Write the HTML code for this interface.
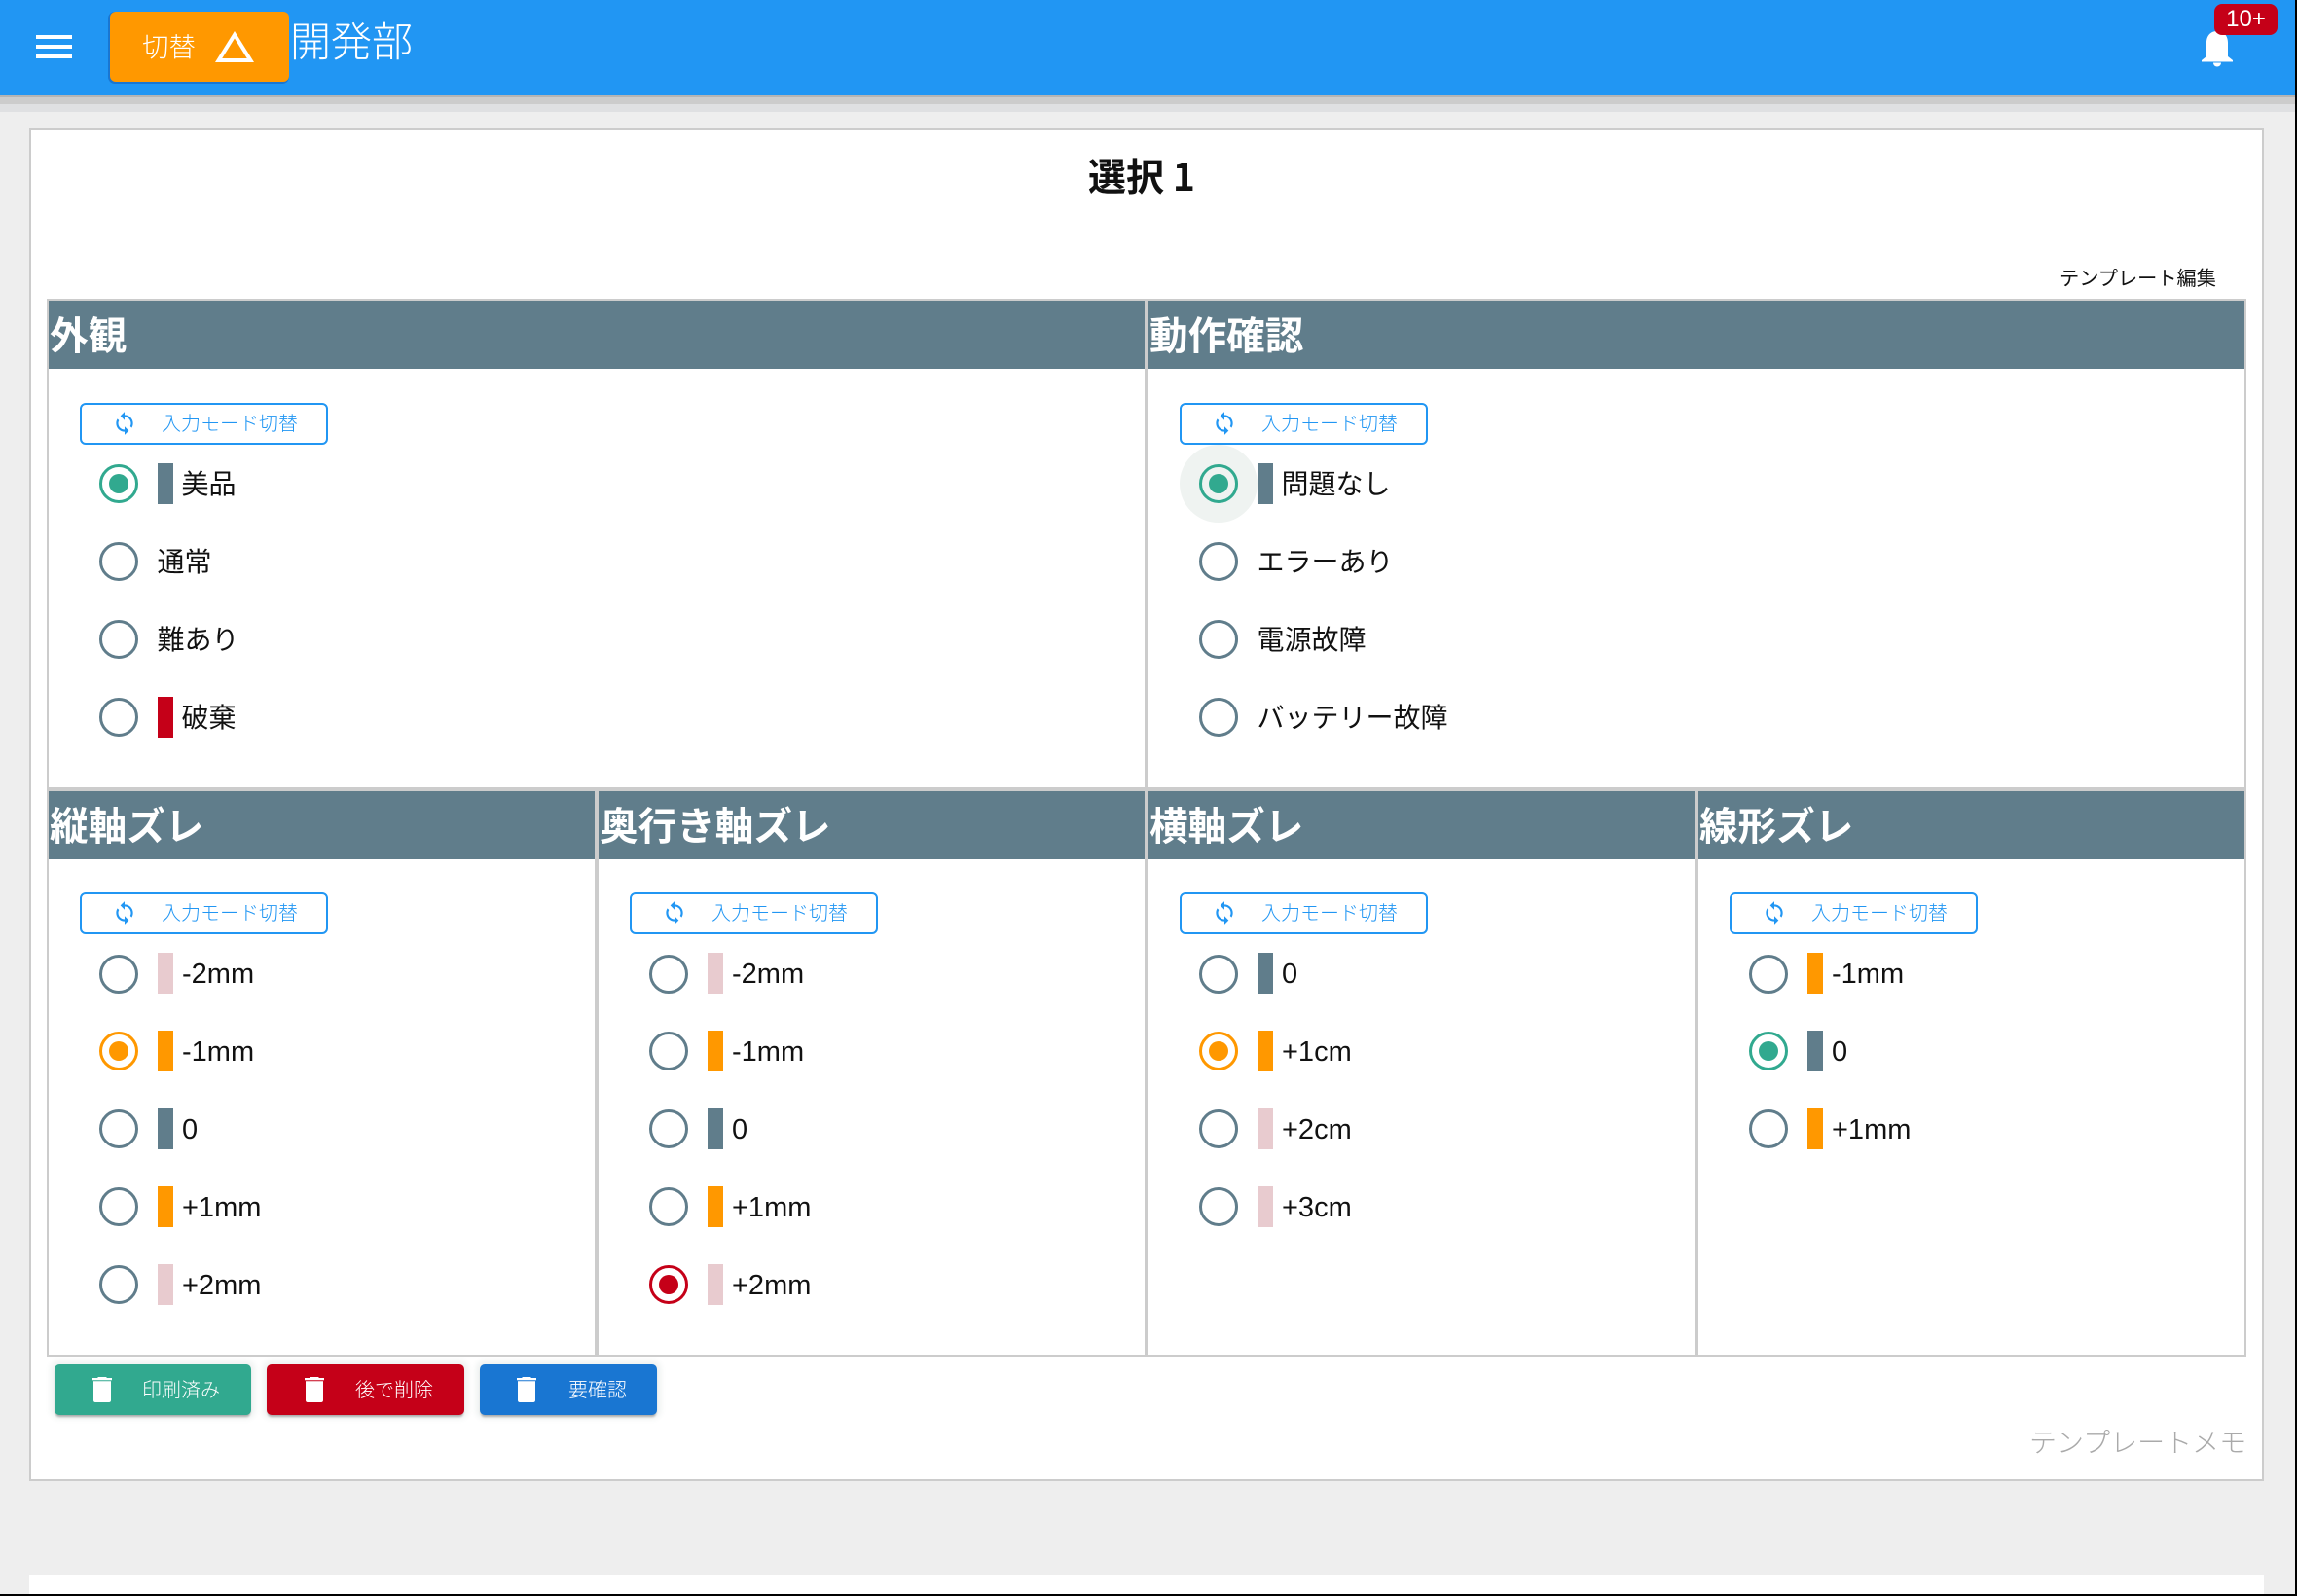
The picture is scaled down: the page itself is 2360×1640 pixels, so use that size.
<!DOCTYPE html>
<html lang="ja"><head><meta charset="utf-8"><title>選択 1</title>
<style>
html,body{margin:0;padding:0;width:2360px;height:1640px;overflow:hidden;background:#000}
body{position:relative;font-family:"Liberation Sans","Noto Sans CJK JP",sans-serif;color:#111}
div,span,svg{position:absolute;box-sizing:border-box}
.t{white-space:nowrap;line-height:40px;height:40px;font-size:28px;margin-top:1px;margin-left:-.5px}
.l{margin-top:1px;margin-left:0;font-size:29px}
.r{width:40px;height:40px;border-radius:50%;border:3px solid #607D8B;background:#fff}
.g{border-color:#31A98F}.o{border-color:#FF9800}.d{border-color:#C50018}
.r i{position:absolute;left:7px;top:7px;width:20px;height:20px;border-radius:50%;display:block}
.g i{background:#31A98F}.o i{background:#FF9800}.d i{background:#C50018}
.b{width:16px;height:42px}
.s{background:#607D8B}.p{background:#E8CBCF}.a{background:#FF9800}.c{background:#C50018}
.h{background:#607D8B;height:70px}
.ht{color:#fff;font-size:39.600px;font-weight:700;line-height:70px;height:70px;white-space:nowrap;margin-top:2px}
.ln{background:#ccc}
.m{width:255px;height:43px;border:2px solid #2196F3;border-radius:6px;background:#fff}
.mt{color:#2196F3;font-size:20px;line-height:39px;left:82px;top:1px;white-space:nowrap;font-weight:300}
.mi{left:31px;top:6px}
.btn{top:1402px;height:52px;border-radius:5px;box-shadow:0 3px 2px -1px rgba(0,0,0,.3),0 0 6px 4px rgba(49,90,80,.08)}
.bt{color:#fff;font-size:20px;line-height:52px;white-space:nowrap;font-weight:300;top:1px}
.ti{top:13px}
</style></head><body>
<div style="left:0;top:0;width:2358px;height:1638px;background:#eee"></div>
<div style="left:0;top:98px;width:2358px;height:9px;background:#ccc"></div>
<div style="left:0;top:98px;width:2358px;height:2px;background:#b4b4b4"></div>
<div style="left:0;top:107px;width:2358px;height:8px;background:#dfe0e2"></div>
<div style="left:0;top:0;width:2358px;height:98px;background:#2196F3"></div>

<div style="left:37px;top:36px;width:37px;height:4px;background:#fff"></div>
<div style="left:37px;top:46px;width:37px;height:4px;background:#fff"></div>
<div style="left:37px;top:56px;width:37px;height:4px;background:#fff"></div>

<div style="left:113px;top:12px;width:184px;height:72px;background:#FF9800;border-radius:6px;box-shadow:-1px 1px 0 1px #1976D2"></div>
<span style="left:146px;top:29px;color:#fff;font-size:27.500px;line-height:40px;white-space:nowrap;font-weight:300">切替</span>
<svg style="left:217px;top:24px" width="48" height="48" viewBox="0 0 24 24"><path fill="#fff" d="M12 7.770L18.390 18H5.610L12 7.770M12 4L2 20h20L12 4z"/></svg>
<span style="left:298px;top:18px;color:#fff;font-size:42px;line-height:52px;white-space:nowrap;font-weight:300">開発部</span>

<svg style="left:2262px;top:30px" width="32" height="40" viewBox="0 0 32 40"><path fill="#fff" d="M16 2c-7 0-11 5-11 12v14L0 32v1.500h32V32l-5-4V14C27 7 23 2 16 2zM12 34.500c0 2.500 2 4 4 4s4-1.500 4-4z"/></svg>
<div style="left:2275px;top:4px;width:65px;height:32px;background:#C50018;border-radius:8px;color:#fff;font-size:24px;line-height:32px;text-align:center">10+</div>

<div style="left:30px;top:132px;width:2296px;height:1390px;background:#fff;border:2px solid #ccc"></div>
<div style="left:30px;top:1618px;width:2296px;height:20px;background:#fff"></div>
<span style="left:1118px;top:156px;font-size:39px;font-weight:700;line-height:48px;white-space:nowrap;font-family:'Noto Sans CJK JP',sans-serif">選択 1</span>
<span style="left:2116px;top:272.500px;font-size:20.200px;line-height:28px;white-space:nowrap;color:#111">テンプレート編集</span>

<!-- grid lines -->
<div class="ln" style="left:48px;top:307px;width:2260px;height:2px"></div>
<div class="ln" style="left:48px;top:809px;width:2260px;height:4px"></div>
<div class="ln" style="left:48px;top:1392px;width:2260px;height:2px"></div>
<div class="ln" style="left:48px;top:307px;width:2px;height:1087px"></div>
<div class="ln" style="left:2306px;top:307px;width:2px;height:1087px"></div>
<div class="ln" style="left:1176px;top:307px;width:4px;height:1087px"></div>
<div class="ln" style="left:611px;top:809px;width:4px;height:585px"></div>
<div class="ln" style="left:1741px;top:809px;width:4px;height:585px"></div>

<!-- headers -->
<div class="h" style="left:50px;top:309px;width:1126px"></div>
<div class="h" style="left:1180px;top:309px;width:1126px"></div>
<div class="h" style="left:50px;top:813px;width:561px"></div>
<div class="h" style="left:615px;top:813px;width:561px"></div>
<div class="h" style="left:1180px;top:813px;width:561px"></div>
<div class="h" style="left:1745px;top:813px;width:561px"></div>
<span class="ht" style="left:51px;top:309px">外観</span>
<span class="ht" style="left:1181px;top:309px">動作確認</span>
<span class="ht" style="left:51px;top:813px">縦軸ズレ</span>
<span class="ht" style="left:616px;top:813px">奥行き軸ズレ</span>
<span class="ht" style="left:1181px;top:813px">横軸ズレ</span>
<span class="ht" style="left:1746px;top:813px">線形ズレ</span>

<!-- mode buttons -->
<div class="m" style="left:82px;top:414px"><svg class="mi" width="26" height="26" viewBox="0 0 24 24"><path fill="#2196F3" d="M12 4V1L8 5l4 4V6c3.310 0 6 2.690 6 6 0 1.010-.25 1.970-.7 2.800l1.460 1.460C19.540 15.030 20 13.570 20 12c0-4.420-3.580-8-8-8zm0 14c-3.310 0-6-2.690-6-6 0-1.010.25-1.970.7-2.800L5.240 7.740C4.460 8.970 4 10.430 4 12c0 4.420 3.580 8 8 8v3l4-4-4-4v3z"/></svg><span class="mt">入力モード切替</span></div>
<div class="m" style="left:1212px;top:414px"><svg class="mi" width="26" height="26" viewBox="0 0 24 24"><path fill="#2196F3" d="M12 4V1L8 5l4 4V6c3.310 0 6 2.690 6 6 0 1.010-.25 1.970-.7 2.800l1.460 1.460C19.540 15.030 20 13.570 20 12c0-4.420-3.580-8-8-8zm0 14c-3.310 0-6-2.690-6-6 0-1.010.25-1.970.7-2.800L5.240 7.740C4.460 8.970 4 10.430 4 12c0 4.420 3.580 8 8 8v3l4-4-4-4v3z"/></svg><span class="mt">入力モード切替</span></div>
<div class="m" style="left:82px;top:917px"><svg class="mi" width="26" height="26" viewBox="0 0 24 24"><path fill="#2196F3" d="M12 4V1L8 5l4 4V6c3.310 0 6 2.690 6 6 0 1.010-.25 1.970-.7 2.800l1.460 1.460C19.540 15.030 20 13.570 20 12c0-4.420-3.580-8-8-8zm0 14c-3.310 0-6-2.690-6-6 0-1.010.25-1.970.7-2.800L5.240 7.740C4.460 8.970 4 10.430 4 12c0 4.420 3.580 8 8 8v3l4-4-4-4v3z"/></svg><span class="mt">入力モード切替</span></div>
<div class="m" style="left:647px;top:917px"><svg class="mi" width="26" height="26" viewBox="0 0 24 24"><path fill="#2196F3" d="M12 4V1L8 5l4 4V6c3.310 0 6 2.690 6 6 0 1.010-.25 1.970-.7 2.800l1.460 1.460C19.540 15.030 20 13.570 20 12c0-4.420-3.580-8-8-8zm0 14c-3.310 0-6-2.690-6-6 0-1.010.25-1.970.7-2.800L5.240 7.740C4.460 8.970 4 10.430 4 12c0 4.420 3.580 8 8 8v3l4-4-4-4v3z"/></svg><span class="mt">入力モード切替</span></div>
<div class="m" style="left:1212px;top:917px"><svg class="mi" width="26" height="26" viewBox="0 0 24 24"><path fill="#2196F3" d="M12 4V1L8 5l4 4V6c3.310 0 6 2.690 6 6 0 1.010-.25 1.970-.7 2.800l1.460 1.460C19.540 15.030 20 13.570 20 12c0-4.420-3.580-8-8-8zm0 14c-3.310 0-6-2.690-6-6 0-1.010.25-1.970.7-2.800L5.240 7.740C4.460 8.970 4 10.430 4 12c0 4.420 3.580 8 8 8v3l4-4-4-4v3z"/></svg><span class="mt">入力モード切替</span></div>
<div class="m" style="left:1777px;top:917px"><svg class="mi" width="26" height="26" viewBox="0 0 24 24"><path fill="#2196F3" d="M12 4V1L8 5l4 4V6c3.310 0 6 2.690 6 6 0 1.010-.25 1.970-.7 2.800l1.460 1.460C19.540 15.030 20 13.570 20 12c0-4.420-3.580-8-8-8zm0 14c-3.310 0-6-2.690-6-6 0-1.010.25-1.970.7-2.800L5.240 7.740C4.460 8.970 4 10.430 4 12c0 4.420 3.580 8 8 8v3l4-4-4-4v3z"/></svg><span class="mt">入力モード切替</span></div>

<!-- 外観 -->
<div class="r g" style="left:102px;top:477px"><i></i></div><div class="b s" style="left:162px;top:476px"></div><span class="t" style="left:187px;top:477px">美品</span>
<div class="r" style="left:102px;top:557px"></div><span class="t" style="left:162px;top:557px">通常</span>
<div class="r" style="left:102px;top:637px"></div><span class="t" style="left:162px;top:637px">難あり</span>
<div class="r" style="left:102px;top:717px"></div><div class="b c" style="left:162px;top:716px"></div><span class="t" style="left:187px;top:717px">破棄</span>

<!-- 動作確認 -->
<div style="left:1212px;top:457px;width:80px;height:80px;border-radius:50%;background:#EFF3F1"></div>
<div class="r g" style="left:1232px;top:477px;background:transparent"><i></i></div><div class="b s" style="left:1292px;top:476px"></div><span class="t" style="left:1317px;top:477px">問題なし</span>
<div class="r" style="left:1232px;top:557px"></div><span class="t" style="left:1292px;top:557px">エラーあり</span>
<div class="r" style="left:1232px;top:637px"></div><span class="t" style="left:1292px;top:637px">電源故障</span>
<div class="r" style="left:1232px;top:717px"></div><span class="t" style="left:1292px;top:717px">バッテリー故障</span>

<!-- 縦軸ズレ -->
<div class="r" style="left:102px;top:981px"></div><div class="b p" style="left:162px;top:979px"></div><span class="t l" style="left:187px;top:980px">-2mm</span>
<div class="r o" style="left:102px;top:1060px"><i></i></div><div class="b a" style="left:162px;top:1059px"></div><span class="t l" style="left:187px;top:1060px">-1mm</span>
<div class="r" style="left:102px;top:1140px"></div><div class="b s" style="left:162px;top:1139px"></div><span class="t l" style="left:187px;top:1140px">0</span>
<div class="r" style="left:102px;top:1220px"></div><div class="b a" style="left:162px;top:1219px"></div><span class="t l" style="left:187px;top:1220px">+1mm</span>
<div class="r" style="left:102px;top:1300px"></div><div class="b p" style="left:162px;top:1299px"></div><span class="t l" style="left:187px;top:1300px">+2mm</span>

<!-- 奥行き軸ズレ -->
<div class="r" style="left:667px;top:981px"></div><div class="b p" style="left:727px;top:979px"></div><span class="t l" style="left:752px;top:980px">-2mm</span>
<div class="r" style="left:667px;top:1060px"></div><div class="b a" style="left:727px;top:1059px"></div><span class="t l" style="left:752px;top:1060px">-1mm</span>
<div class="r" style="left:667px;top:1140px"></div><div class="b s" style="left:727px;top:1139px"></div><span class="t l" style="left:752px;top:1140px">0</span>
<div class="r" style="left:667px;top:1220px"></div><div class="b a" style="left:727px;top:1219px"></div><span class="t l" style="left:752px;top:1220px">+1mm</span>
<div class="r d" style="left:667px;top:1300px"><i></i></div><div class="b p" style="left:727px;top:1299px"></div><span class="t l" style="left:752px;top:1300px">+2mm</span>

<!-- 横軸ズレ -->
<div class="r" style="left:1232px;top:981px"></div><div class="b s" style="left:1292px;top:979px"></div><span class="t l" style="left:1317px;top:980px">0</span>
<div class="r o" style="left:1232px;top:1060px"><i></i></div><div class="b a" style="left:1292px;top:1059px"></div><span class="t l" style="left:1317px;top:1060px">+1cm</span>
<div class="r" style="left:1232px;top:1140px"></div><div class="b p" style="left:1292px;top:1139px"></div><span class="t l" style="left:1317px;top:1140px">+2cm</span>
<div class="r" style="left:1232px;top:1220px"></div><div class="b p" style="left:1292px;top:1219px"></div><span class="t l" style="left:1317px;top:1220px">+3cm</span>

<!-- 線形ズレ -->
<div class="r" style="left:1797px;top:981px"></div><div class="b a" style="left:1857px;top:979px"></div><span class="t l" style="left:1882px;top:980px">-1mm</span>
<div class="r g" style="left:1797px;top:1060px"><i></i></div><div class="b s" style="left:1857px;top:1059px"></div><span class="t l" style="left:1882px;top:1060px">0</span>
<div class="r" style="left:1797px;top:1140px"></div><div class="b a" style="left:1857px;top:1139px"></div><span class="t l" style="left:1882px;top:1140px">+1mm</span>

<!-- action buttons -->
<div class="btn" style="left:56px;width:202px;background:#31A98F"><svg class="ti" style="left:39px" width="20" height="26" viewBox="0 0 20 26"><path fill="#fff" d="M6 0h8l1 1h5v2.200H0V1h5zM1 4.300h18V24c0 1.200-.9 2-2 2H3c-1.100 0-2-.8-2-2z"/></svg><span class="bt" style="left:90px">印刷済み</span></div>
<div class="btn" style="left:274px;width:203px;background:#C50018"><svg class="ti" style="left:39px" width="20" height="26" viewBox="0 0 20 26"><path fill="#fff" d="M6 0h8l1 1h5v2.200H0V1h5zM1 4.300h18V24c0 1.200-.9 2-2 2H3c-1.100 0-2-.8-2-2z"/></svg><span class="bt" style="left:91px">後で削除</span></div>
<div class="btn" style="left:493px;width:182px;background:#1976D2"><svg class="ti" style="left:38px" width="20" height="26" viewBox="0 0 20 26"><path fill="#fff" d="M6 0h8l1 1h5v2.200H0V1h5zM1 4.300h18V24c0 1.200-.9 2-2 2H3c-1.100 0-2-.8-2-2z"/></svg><span class="bt" style="left:91px">要確認</span></div>

<span style="left:2085px;top:1463px;font-size:28px;line-height:40px;color:#aaa;white-space:nowrap;font-weight:300">テンプレートメモ</span>
</body></html>
